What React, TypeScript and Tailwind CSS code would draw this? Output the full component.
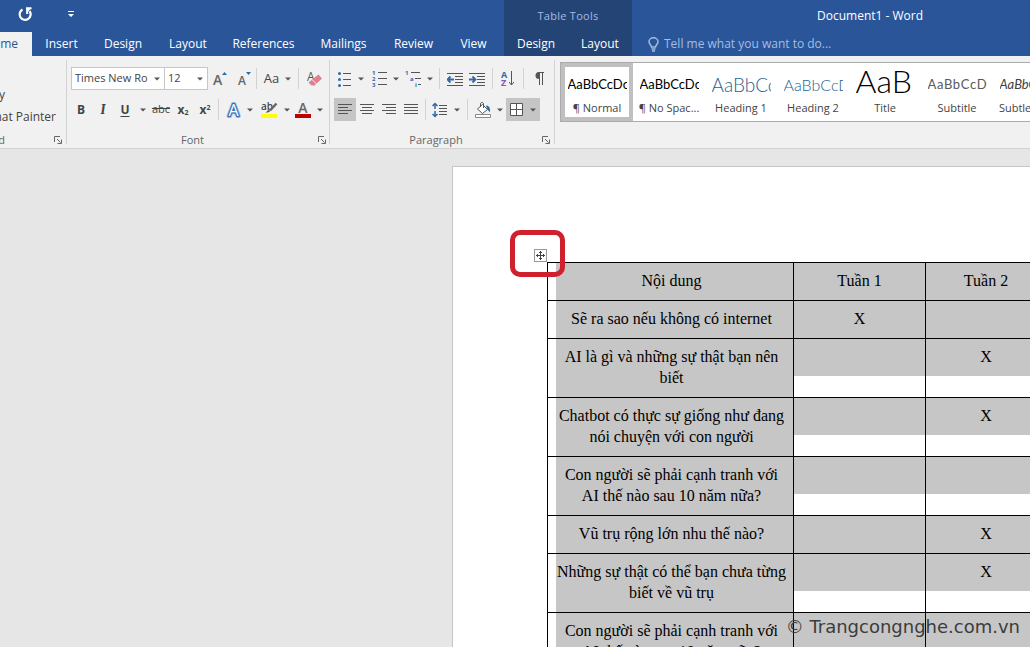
import type { ReactNode } from 'react'

interface ButtonProps {
  label: string
  className: string
  children: ReactNode
  hasMenu?: boolean
}

interface TableRow {
  lines: string[]
  week1: string
  week2: string
}

const TABS = ['Insert', 'Design', 'Layout', 'References', 'Mailings', 'Review', 'View']

const STYLES = [
  { name: '¶ Normal', sample: 'AaBbCcDc', look: 'text-[13px] leading-[27px] text-black' },
  { name: '¶ No Spac...', sample: 'AaBbCcDc', look: 'text-[13px] leading-[27px] text-black' },
  { name: 'Heading 1', sample: 'AaBbCc', look: 'text-[19px] leading-[27px] font-light text-[#1f6391]' },
  { name: 'Heading 2', sample: 'AaBbCcD', look: 'text-[16px] leading-[27px] font-light text-[#1f6391]' },
  { name: 'Title', sample: 'AaB', look: 'text-[32px] leading-[19px] font-light text-black' },
  { name: 'Subtitle', sample: 'AaBbCcD', look: 'text-[13px] leading-[27px] tracking-wider text-[#5a5a5a]' },
  { name: 'Subtle Em...', sample: 'AaBbCcDc', look: 'text-[13px] leading-[27px] italic text-[#404040]' }
]

const ROWS: TableRow[] = [
  { lines: ['Sẽ ra sao nếu không có internet'], week1: 'X', week2: '' },
  { lines: ['AI là gì và những sự thật bạn nên', 'biết'], week1: '', week2: 'X' },
  { lines: ['Chatbot có thực sự giống như đang', 'nói chuyện với con người'], week1: '', week2: 'X' },
  { lines: ['Con người sẽ phải cạnh tranh với', 'AI thế nào sau 10 năm nữa?'], week1: '', week2: '' },
  { lines: ['Vũ trụ rộng lớn nhu thế nào?'], week1: '', week2: 'X' },
  { lines: ['Những sự thật có thể bạn chưa từng', 'biết về vũ trụ'], week1: '', week2: 'X' },
  { lines: ['Con người sẽ phải cạnh tranh với', 'AI thế nào sau 10 năm nữa?'], week1: '', week2: '' }
]

function Caret() {
  return (
    <svg width="6" height="4" viewBox="0 0 6 4" className="shrink-0">
      <path d="M0 0.5h6L3 3.5z" fill="#555" />
    </svg>
  )
}

function RibbonButton({ label, className, children, hasMenu }: ButtonProps) {
  return (
    <button
      type="button"
      aria-label={label}
      className={`flex h-[23px] shrink-0 items-center justify-center gap-[6px] ${className}`}
    >
      {children}
      {hasMenu && <Caret />}
    </button>
  )
}

function Separator({ className }: { className: string }) {
  return <div className={`w-px shrink-0 bg-[#d2d2d2] ${className}`} />
}

function LauncherIcon() {
  return (
    <svg width="8" height="8" viewBox="0 0 8 8" fill="none" stroke="#666">
      <path d="M0.5 6V0.5H6M3 3l3.5 3.5M7.5 3.5v4h-4" />
    </svg>
  )
}

function GroupFooter({ title }: { title: string }) {
  return (
    <div className="mt-2 flex h-[22px] items-center">
      <span className="flex-1 text-center text-[11px] text-[#666]">{title}</span>
      <button type="button" aria-label={`${title} settings`} className="mr-1">
        <LauncherIcon />
      </button>
    </div>
  )
}

// Horizontal strokes of a paragraph, given as [x1, x2, y]
function Lines({ rows }: { rows: number[][] }) {
  return (
    <>
      {rows.map(([x1, x2, y]) => (
        <path key={`${x1}-${y}`} d={`M${x1} ${y}H${x2}`} stroke="#555" />
      ))}
    </>
  )
}

function AlignIcon({ rows }: { rows: number[][] }) {
  return (
    <svg width="14" height="12" viewBox="0 0 14 12">
      <Lines rows={rows} />
    </svg>
  )
}

function IndentIcon({ inward }: { inward: boolean }) {
  return (
    <svg width="16" height="14" viewBox="0 0 16 14">
      <Lines rows={[[0, 16, 1.5], [8, 16, 4.5], [8, 16, 7.5], [8, 16, 10.5], [0, 16, 13.5]]} />
      <path
        d={inward ? 'M0 7.500h6M3.500 4.500l3 3-3 3' : 'M7 7.500H1M3.500 4.500l-3 3 3 3'}
        stroke="#2f6aa8"
        strokeWidth="1.800"
        fill="none"
      />
    </svg>
  )
}

function TitleBar() {
  return (
    <header className="flex h-14 shrink-0 bg-[#2a5699] text-white">
      <div className="w-[504px] shrink-0">
        <div className="flex h-8 items-center pl-[18px]">
          <button type="button" aria-label="Redo" className="-mt-1">
            <svg width="15" height="15" viewBox="0 0 15 15" fill="none" stroke="#fff" strokeWidth="2.200">
              <path d="M4.500 2.500A5.500 5.500 0 1 0 11.500 4" />
              <path d="M8 1.200h5.500M9.200 1v6" strokeWidth="2" />
              <path d="M8.500 1h5l-5 5z" fill="#fff" stroke="none" />
            </svg>
          </button>
          <button type="button" aria-label="Customize Quick Access Toolbar" className="-mt-1 ml-[35px]">
            <svg width="6" height="7" viewBox="0 0 6 7" fill="#fff">
              <path d="M0 0h6v1H0zM0 3h6L3 6z" />
            </svg>
          </button>
        </div>
        <nav className="grid h-6 grid-cols-[32px_59px_64px_66px_85px_75px_65px_55px] text-[12px]">
          <button type="button" className="flex items-center justify-end overflow-hidden bg-[#f1f1f1] pr-[14px] text-[#2a5699]">
            Home
          </button>
          {TABS.map((tab) => (
            <button key={tab} type="button" className="flex items-center justify-center">
              {tab}
            </button>
          ))}
        </nav>
      </div>

      {/* Contextual tabs */}
      <div className="w-32 shrink-0 bg-[#234475]">
        <div className="flex h-8 items-center justify-center text-[11px] tracking-wide text-[#a3bde3]">Table Tools</div>
        <div className="grid h-6 grid-cols-2 text-[12px]">
          <button type="button">Design</button>
          <button type="button">Layout</button>
        </div>
      </div>

      <div className="flex-1">
        <div className="flex h-8 items-center pl-[185px] text-[12px] whitespace-nowrap">Document1 - Word</div>
        <label className="flex h-6 items-center gap-[5px] pl-4">
          <svg width="11" height="15" viewBox="0 0 11 15" fill="none" stroke="#a3bde3" strokeWidth="1.500">
            <path d="M3.500 10c0-2-2.500-2.800-2.500-5.200a4.500 4 0 0 1 9 0C10 7.200 7.500 8 7.500 10z" />
            <path d="M3.500 12h4M4 14h3" />
          </svg>
          <input
            type="text"
            aria-label="Tell me what you want to do"
            placeholder="Tell me what you want to do..."
            className="w-60 bg-transparent text-[12px] outline-none placeholder:text-[#a3bde3]"
          />
        </label>
      </div>
    </header>
  )
}

function ClipboardGroup() {
  return (
    <section className="w-[66px] shrink-0 overflow-hidden">
      <div className="flex h-[54px] flex-col items-end pt-[17px] text-[12px]">
        <button type="button" className="mr-[61px] flex h-[22px] shrink-0 items-center">Copy</button>
        <button type="button" className="mr-[10px] flex h-[22px] shrink-0 items-center whitespace-nowrap">Format Painter</button>
      </div>
      <div className="mt-2 flex h-[22px] items-center justify-between pr-1">
        <span className="flex w-[5px] justify-end text-[11px] text-[#666]">Clipboard</span>
        <button type="button" aria-label="Clipboard settings">
          <LauncherIcon />
        </button>
      </div>
    </section>
  )
}

function FontGroup() {
  return (
    <section className="w-[263px] shrink-0">
      <div className="flex h-[23px] items-center pl-1">
        <div className="flex h-[23px] w-[94px] items-center border border-[#c6c6c6] bg-white pr-1">
          <select aria-label="Font" className="min-w-0 flex-1 appearance-none overflow-hidden bg-white pl-[3px] text-[11px] whitespace-nowrap">
            <option>Times New Ro</option>
          </select>
          <Caret />
        </div>
        <div className="-ml-px flex h-[23px] w-11 items-center border border-[#c6c6c6] bg-white pr-1">
          <select aria-label="Font size" className="min-w-0 flex-1 appearance-none bg-white pl-[3px] text-[11px]">
            <option>12</option>
          </select>
          <Caret />
        </div>
        <RibbonButton label="Grow font" className="w-6">
          <svg width="14" height="15" viewBox="0 0 14 15">
            <text x="0" y="14" fontSize="14" fontWeight="600" fill="#666">A</text>
            <path d="M9 4h5l-2.500-3z" fill="#2f6aa8" />
          </svg>
        </RibbonButton>
        <RibbonButton label="Shrink font" className="w-6">
          <svg width="13" height="15" viewBox="0 0 13 15">
            <text x="0" y="14" fontSize="12" fontWeight="600" fill="#666">A</text>
            <path d="M8 1h5l-2.500 3z" fill="#2f6aa8" />
          </svg>
        </RibbonButton>
        <Separator className="h-[21px]" />
        <RibbonButton label="Change case" className="w-[41px] text-[13px]" hasMenu>
          <span>Aa</span>
        </RibbonButton>
        <Separator className="h-[21px]" />
        <RibbonButton label="Clear formatting" className="w-[30px]">
          <svg width="15" height="16" viewBox="0 0 15 16">
            <text x="0" y="10" fontSize="12" fill="#555">A</text>
            <path d="M11.500 3.500L15 7.500l-7.500 7H4.500L1.500 11.500z" fill="#e07f90" />
            <path d="M5 8.500l4.500 4.500" stroke="#f1f1f1" />
          </svg>
        </RibbonButton>
      </div>

      <div className="mt-2 flex h-[23px] items-center pl-1">
        <RibbonButton label="Bold" className="w-5 text-[12px] font-bold">B</RibbonButton>
        <RibbonButton label="Italic" className="w-6 font-serif text-[14px] font-bold italic">I</RibbonButton>
        <RibbonButton label="Underline" className="w-9 text-[12px]" hasMenu>
          <span className="mr-1 font-bold underline underline-offset-2">U</span>
        </RibbonButton>
        <RibbonButton label="Strikethrough" className="w-5 text-[11px] line-through">abc</RibbonButton>
        <RibbonButton label="Subscript" className="w-6 text-[12px] font-bold">
          <span>x<sub className="text-[7px]">2</sub></span>
        </RibbonButton>
        <RibbonButton label="Superscript" className="w-5 text-[12px] font-bold">
          <span>x<sup className="text-[7px]">2</sup></span>
        </RibbonButton>
        <Separator className="mr-[2px] ml-[3px] h-[21px]" />
        <RibbonButton label="Text effects" className="w-9" hasMenu>
          <svg width="15" height="16" viewBox="0 0 15 16" strokeLinejoin="round">
            <text x="7.500" y="14" fontSize="16" textAnchor="middle" fill="none" stroke="#a9c8ea" strokeWidth="4">A</text>
            <text x="7.500" y="14" fontSize="16" textAnchor="middle" fill="none" stroke="#3a73b4" strokeWidth="2.500">A</text>
            <text x="7.500" y="14" fontSize="16" textAnchor="middle" fill="#fff">A</text>
          </svg>
        </RibbonButton>
        <RibbonButton label="Highlight" className="w-9" hasMenu>
          <svg width="17" height="17" viewBox="0 0 17 17">
            <text x="0" y="9" fontSize="10" fontWeight="600" fill="#444">ab</text>
            <path d="M15.500 2.500L9 9.500" stroke="#666" strokeWidth="2.500" />
            <path d="M4 11.500c2 0 2-3 4.500-2.500 1 1.500 0 3-4.500 2.500z" fill="#555" />
            <path d="M0 13h16v4H0z" fill="#ff0" />
          </svg>
        </RibbonButton>
        <RibbonButton label="Font color" className="w-8" hasMenu>
          <svg width="16" height="17" viewBox="0 0 16 17">
            <text x="8" y="12" fontSize="14" fontWeight="600" textAnchor="middle" fill="#666">A</text>
            <path d="M0 13h16v4H0z" fill="#c00000" />
          </svg>
        </RibbonButton>
      </div>
      <GroupFooter title="Font" />
    </section>
  )
}

function ParagraphGroup() {
  return (
    <section className="w-[224px] shrink-0">
      <div className="flex h-[23px] items-center pl-1">
        <RibbonButton label="Bullets" className="w-[34px]" hasMenu>
          <svg width="14" height="16" viewBox="0 0 14 16">
            <g fill="#2f6aa8">
              <circle cx="1.500" cy="2.500" r="1.500" />
              <circle cx="1.500" cy="8.500" r="1.500" />
              <circle cx="1.500" cy="14.500" r="1.500" />
            </g>
            <Lines rows={[[5, 13, 2.5], [5, 13, 8.5], [5, 13, 14.5]]} />
          </svg>
        </RibbonButton>
        <RibbonButton label="Numbering" className="w-[34px]" hasMenu>
          <svg width="15" height="17" viewBox="0 0 15 17">
            <g fill="#2f6aa8" fontSize="6" fontWeight="700">
              <text x="0" y="5">1</text>
              <text x="0" y="11">2</text>
              <text x="0" y="17">3</text>
            </g>
            <Lines rows={[[6, 15, 2.5], [6, 15, 8.5], [6, 15, 14.5]]} />
          </svg>
        </RibbonButton>
        <RibbonButton label="Multilevel list" className="w-[34px]" hasMenu>
          <svg width="16" height="17" viewBox="0 0 16 17">
            <g fill="#2f6aa8" fontSize="6" fontWeight="700">
              <text x="0" y="5">1</text>
              <text x="5" y="11">a</text>
              <text x="10" y="17">i</text>
            </g>
            <Lines rows={[[6, 15, 2.5], [10, 16, 8.5], [13, 16, 14.5]]} />
          </svg>
        </RibbonButton>
        <Separator className="ml-[3px] h-[21px]" />
        <RibbonButton label="Decrease indent" className="ml-1 w-[22px]"><IndentIcon inward={false} /></RibbonButton>
        <RibbonButton label="Increase indent" className="w-[22px]"><IndentIcon inward /></RibbonButton>
        <Separator className="ml-1 h-[21px]" />
        <RibbonButton label="Sort" className="w-[30px]">
          <svg width="14" height="17" viewBox="0 0 14 17">
            <text x="0" y="8" fontSize="9" fontWeight="700" fill="#2f6aa8">A</text>
            <text x="0" y="16" fontSize="9" fontWeight="700" fill="#8a5aa8">Z</text>
            <path d="M10.500 1v14M8 12l2.500 3 2.500-3" fill="none" stroke="#555" />
          </svg>
        </RibbonButton>
        <Separator className="h-[21px]" />
        <RibbonButton label="Show marks" className="w-[30px]">
          <svg width="10" height="13" viewBox="0 0 10 13">
            <path d="M4.500 0.500H10M5.500 0.500V13M8.500 0.500V13" stroke="#555" fill="none" />
            <path d="M5 0a3.500 3.500 0 0 0 0 7z" fill="#555" />
          </svg>
        </RibbonButton>
      </div>

      <div className="mt-2 flex h-[23px] items-center pl-1">
        <RibbonButton label="Align left" className="w-[22px] bg-[#c5c5c5]">
          <AlignIcon rows={[[0, 14, 0.5], [0, 10, 3.5], [0, 14, 6.5], [0, 10, 9.5]]} />
        </RibbonButton>
        <RibbonButton label="Center" className="w-[22px]">
          <AlignIcon rows={[[0, 14, 0.5], [2, 12, 3.5], [0, 14, 6.5], [2, 12, 9.5]]} />
        </RibbonButton>
        <RibbonButton label="Align right" className="w-[22px]">
          <AlignIcon rows={[[0, 14, 0.5], [4, 14, 3.5], [0, 14, 6.5], [4, 14, 9.5]]} />
        </RibbonButton>
        <RibbonButton label="Justify" className="w-[22px]">
          <AlignIcon rows={[[0, 14, 0.5], [0, 14, 3.5], [0, 14, 6.5], [0, 14, 9.5]]} />
        </RibbonButton>
        <Separator className="mx-[3px] h-[21px]" />
        <RibbonButton label="Line spacing" className="w-[34px]" hasMenu>
          <svg width="16" height="16" viewBox="0 0 16 16">
            <path d="M3 1.500v5.500M3 9v5.500M0.500 4L3 1.500 5.500 4M0.500 12L3 14.500 5.500 12" fill="none" stroke="#2f6aa8" strokeWidth="1.500" />
            <Lines rows={[[7, 15, 3.5], [7, 15, 6.5], [7, 15, 9.5], [7, 15, 12.5]]} />
          </svg>
        </RibbonButton>
        <Separator className="mx-1 h-[21px]" />
        <RibbonButton label="Shading" className="w-[34px]" hasMenu>
          <svg width="16" height="16" viewBox="0 0 16 16" fill="none" stroke="#555">
            <path d="M7.500 2.500l5 5-5 4-5-4.500z" fill="#fff" />
            <path d="M5.500 5V2c0-2 3-2 3 0v4" />
            <path d="M11 3.500c3 0 4.500 2.500 4 7-1-1.500-2-2-2.500-3z" fill="#2f6aa8" stroke="none" />
            <path d="M0.500 12.500h15v3H0.500z" fill="#fff" stroke="#888" />
          </svg>
        </RibbonButton>
        <RibbonButton label="Borders" className="w-[34px] bg-[#c5c5c5]" hasMenu>
          <svg width="14" height="14" viewBox="0 0 14 14">
            <path d="M0.500 0.500h12v12H0.500zM6.500 0.500v12M0.500 6.500h12" fill="#fff" stroke="#555" />
          </svg>
        </RibbonButton>
      </div>
      <GroupFooter title="Paragraph" />
    </section>
  )
}

function StylesGallery() {
  return (
    <section className="-mt-[5px] min-w-0 flex-1 pl-[5px]">
      <div className="flex h-[60px] overflow-hidden border border-r-0 border-[#ababab] bg-white">
        {STYLES.map((style, index) => (
          <button
            key={style.name}
            type="button"
            className={`flex w-[72px] shrink-0 flex-col items-center border-4 pt-1 ${index === 0 ? 'border-[#c0c0c0]' : 'border-transparent'}`}
          >
            <span className={`flex h-[27px] w-[59px] shrink-0 items-start overflow-hidden font-[Lato,sans-serif] whitespace-nowrap ${style.look}`}>
              {style.sample}
            </span>
            <span className="text-[11px] leading-[20px] whitespace-nowrap">{style.name}</span>
          </button>
        ))}
      </div>
    </section>
  )
}

// Selected text is shaded only as far as the first line in the narrow columns
function WeekCell({ value }: { value: string }) {
  return (
    <td className="border border-black p-0 align-top">
      <div className="h-[37px] bg-[#c6c6c6] pt-[7px] text-center">{value}</div>
    </td>
  )
}

function DocumentTable() {
  return (
    <table className="w-[499px] table-fixed border-collapse font-['Liberation_Serif',serif] text-[16px] leading-[21px] text-black">
      <colgroup>
        <col className="w-[246px]" />
        <col className="w-[132px]" />
        <col className="w-[121px]" />
      </colgroup>
      <thead>
        <tr>
          <th className="border border-black p-0 pl-2 font-normal">
            <div className="bg-[#c6c6c6] pt-[7px] pr-[6px] pb-[9px]">Nội dung</div>
          </th>
          {['Tuần 1', 'Tuần 2'].map((week) => (
            <th key={week} className="border border-black p-0 font-normal">
              <div className="bg-[#c6c6c6] pt-[7px] pb-[9px]">{week}</div>
            </th>
          ))}
        </tr>
      </thead>
      <tbody>
        {ROWS.map((row, index) => (
          <tr key={index}>
            <td className="border border-black p-0 pl-2">
              <div className="bg-[#c6c6c6] pt-[7px] pr-[6px] pb-[9px] text-center">
                {row.lines.map((line) => (
                  <span key={line} className="block whitespace-nowrap">{line}</span>
                ))}
              </div>
            </td>
            <WeekCell value={row.week1} />
            <WeekCell value={row.week2} />
          </tr>
        ))}
      </tbody>
    </table>
  )
}

export default function App() {
  return (
    <div className="relative flex h-screen flex-col overflow-hidden bg-[#e6e6e6] font-['Open_Sans',sans-serif] text-[#444]">
      <TitleBar />

      {/* Ribbon */}
      <div className="flex h-[93px] shrink-0 border-b border-[#d2d2d2] bg-[#f1f1f1] pt-[11px]">
        <ClipboardGroup />
        <Separator className="-mt-[7px] h-[84px]" />
        <FontGroup />
        <Separator className="-mt-[7px] -ml-px h-[84px]" />
        <ParagraphGroup />
        <Separator className="-mt-[7px] h-[84px]" />
        <StylesGallery />
      </div>

      {/* Document */}
      <main className="min-h-0 flex-1 overflow-hidden pt-[17px] pl-[452px]">
        <div className="relative h-full border-t border-l border-[#c6c6c6] bg-white pt-[95px] pl-[94px]">
          <DocumentTable />
          <button
            type="button"
            aria-label="Move table"
            className="absolute top-[82px] left-[81px] flex size-[13px] items-center justify-center border border-[#999] bg-white"
          >
            <svg width="9" height="9" viewBox="0 0 9 9" fill="none" stroke="#444">
              <path d="M4.500 0v9M0 4.500h9M3 1.500h3M3 7.500h3M1.500 3v3M7.500 3v3" />
            </svg>
          </button>
          <div className="absolute top-[63px] left-[57px] h-[47px] w-[55px] rounded-[10px] border-5 border-[#d0202e]" />
        </div>
      </main>

      <p className="absolute right-[10px] bottom-2 font-['DejaVu_Sans',sans-serif] text-[18px] leading-6 text-[#3c3c3c]">
        © Trangcongnghe.com.vn
      </p>
    </div>
  )
}
